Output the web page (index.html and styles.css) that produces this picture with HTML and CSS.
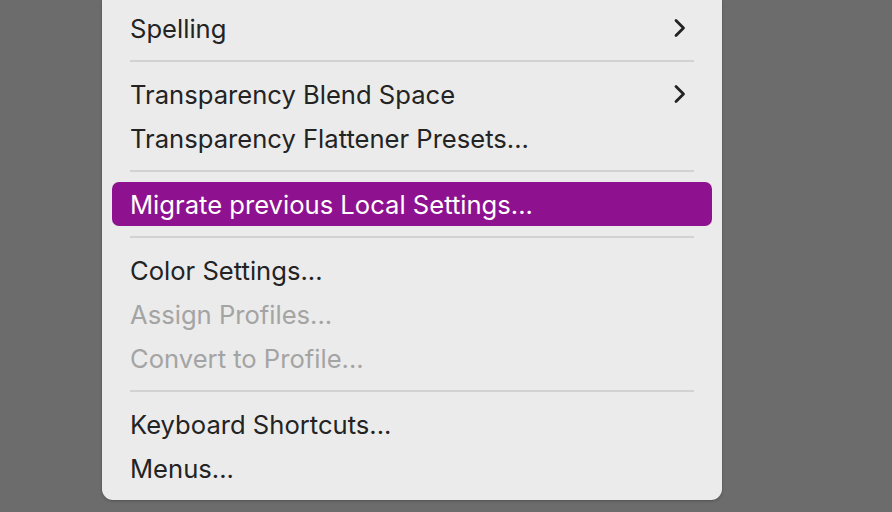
FILE: index.html
```html
<!DOCTYPE html>
<html>
<head>
<meta charset="utf-8">
<link rel="stylesheet" href="styles.css">
</head>
<body>
<div class="menu">
  <div class="item"><span>Spelling</span><svg class="chev" viewBox="0 0 12 20" width="12" height="20"><path d="M2 2.5 L9.5 10 L2 17.5" fill="none" stroke="#222" stroke-width="2.8" stroke-linecap="round" stroke-linejoin="round"/></svg></div>
  <div class="sep"></div>
  <div class="item"><span>Transparency Blend Space</span><svg class="chev" viewBox="0 0 12 20" width="12" height="20"><path d="M2 2.5 L9.5 10 L2 17.5" fill="none" stroke="#222" stroke-width="2.8" stroke-linecap="round" stroke-linejoin="round"/></svg></div>
  <div class="item"><span>Transparency Flattener Presets...</span></div>
  <div class="sep"></div>
  <div class="item active"><span>Migrate previous Local Settings...</span></div>
  <div class="sep"></div>
  <div class="item"><span>Color Settings...</span></div>
  <div class="item disabled"><span>Assign Profiles...</span></div>
  <div class="item disabled"><span>Convert to Profile...</span></div>
  <div class="sep"></div>
  <div class="item"><span>Keyboard Shortcuts...</span></div>
  <div class="item"><span>Menus...</span></div>
</div>
</body>
</html>
```
FILE: styles.css
```css
html, body {
  margin: 0;
  padding: 0;
  background: #6c6c6c;
  width: 892px;
  height: 512px;
  overflow: hidden;
}
body {
  font-family: Inter, "Noto Sans", sans-serif;
}
.menu {
  width: 600px;
  margin-left: 102px;
  padding: 6px 10px 10px;
  background: #ebebeb;
  border-radius: 0 0 11px 11px;
  box-shadow: 0 1px 3px rgba(0,0,0,0.25);
}
.item {
  height: 44px;
  display: flex;
  align-items: center;
  justify-content: space-between;
  padding: 0 26px 0 18px;
  font-size: 25.6px;
  color: #232323;
  border-radius: 7px;
}
.item.active {
  background: #8e1290;
  color: #ffffff;
}
.item.disabled {
  color: #a4a4a4;
}
.chev {
  display: block;
}
.sep {
  height: 2px;
  margin: 10px 18px;
  background: #d2d2d2;
}
```
